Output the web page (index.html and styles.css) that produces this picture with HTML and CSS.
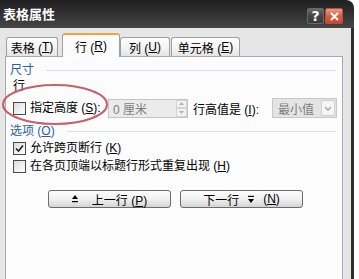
FILE: index.html
```html
<!DOCTYPE html>
<html lang="zh">
<head>
    <meta charset="UTF-8">
    <title>表格属性</title>
    <link rel="stylesheet" href="styles.css">
</head>
<body>

<div class="window">
    <div class="titlebar">
        <span class="title">表格属性</span>
        <div class="caption-btns">
            <span class="cbtn help">?</span>
            <span class="cbtn close">
                <svg width="9" height="9" viewBox="0 0 9 9"><path d="M1 1 L8 8 M8 1 L1 8" stroke="#fff" stroke-width="2"/></svg>
            </span>
        </div>
    </div>

    <div class="client">
        <div class="tabs">
            <div class="tab first">表格 (<u>T</u>)</div>
            <div class="tab active">行 (<u>R</u>)</div>
            <div class="tab">列 (<u>U</u>)</div>
            <div class="tab last">单元格 (<u>E</u>)</div>
        </div>

        <div class="panel">
            <!-- red ring drawn over the checkbox -->
            <svg class="mark" width="108" height="43" viewBox="0 0 108 43">
                <ellipse cx="54" cy="21.5" rx="52" ry="19.5" fill="none" stroke="#c8606c" stroke-width="2"/>
            </svg>

            <div class="group">尺寸</div>
            <div class="sub">行</div>

            <div class="height-row">
                <label class="check size">
                    <span class="box"></span>指定高度 (<u>S</u>):
                </label>
                <div class="spin">
                    <span>0 厘米</span>
                    <span class="spin-btns">
                        <span class="sb"><svg width="5" height="3" viewBox="0 0 5 3"><path d="M0 3 L2.5 0 L5 3Z" fill="#b0b0b0"/></svg></span>
                        <span class="sb"><svg width="5" height="3" viewBox="0 0 5 3"><path d="M0 0 L2.5 3 L5 0Z" fill="#b0b0b0"/></svg></span>
                    </span>
                </div>
                <span class="lbl">行高值是 (<u>I</u>):</span>
                <div class="select">
                    <span>最小值</span>
                    <span class="arrow">
                        <svg width="8" height="5" viewBox="0 0 8 5"><path d="M1 1 L4 4 L7 1" fill="none" stroke="#a8a8a8" stroke-width="1.5"/></svg>
                    </span>
                </div>
            </div>

            <div class="group options">选项 (<u>O</u>)</div>

            <label class="check opt">
                <span class="box">
                    <svg width="9" height="9" viewBox="0 0 9 9"><path d="M1 4.5 L3.5 7 L8 1.5" fill="none" stroke="#222" stroke-width="1.6"/></svg>
                </span>允许跨页断行 (<u>K</u>)
            </label>
            <label class="check opt second">
                <span class="box"></span>在各页顶端以标题行形式重复出现 (<u>H</u>)
            </label>

            <div class="nav">
                <button class="navbtn">
                    <svg class="ico" width="6" height="8" viewBox="0 0 6 8"><path d="M0 4 L3 0 L6 4Z" fill="#000"/><rect x="0" y="6" width="6" height="1.2" fill="#000"/></svg>
                    <span>上一行 (<u>P</u>)</span>
                </button>
                <button class="navbtn">
                    <span>下一行</span>
                    <svg class="ico down" width="6" height="8" viewBox="0 0 6 8"><rect x="0" y="0.8" width="6" height="1.2" fill="#000"/><path d="M0 4 L3 8 L6 4Z" fill="#000"/></svg>
                    <span>(<u>N</u>)</span>
                </button>
            </div>
        </div>
    </div>
</div>

</body>
</html>
```

FILE: styles.css
```css
body {
    margin: 0;
    background: #fff;
    font-family: "Liberation Sans", "Noto Sans CJK SC", sans-serif;
    font-size: 12px;
    color: #000;
    overflow: hidden;
}
u {
    text-decoration: underline;
}
.window {
    width: 354px;
}
.titlebar {
    height: 28px;
    box-sizing: border-box;
    display: flex;
    justify-content: space-between;
    padding: 0 11px 0 3px;
    background: linear-gradient(to bottom, #1f1f1f, #333 55%, #474747);
    border-top-right-radius: 8px;
}
.title {
    color: #fff;
    font-weight: bold;
    font-size: 13px;
    font-family: "Noto Sans CJK SC", sans-serif;
    line-height: 28px;
}
.caption-btns {
    display: flex;
    gap: 1px;
    margin-top: 8px;
}
.cbtn {
    width: 18px;
    height: 16px;
    box-sizing: border-box;
    border-radius: 2px;
    display: flex;
    align-items: center;
    justify-content: center;
}
.help {
    width: 17px;
    border: 1px solid #6a6a6a;
    background: linear-gradient(to bottom, #6a6a6a, #444 50%, #3a3a3a);
    color: #fff;
    font-weight: bold;
    font-size: 14px;
    font-family: "DejaVu Sans", sans-serif;
}
.close {
    border: 1px solid #b05040;
    background: linear-gradient(to bottom, #ec9a80, #d8603f 50%, #c8462c);
}
.client {
    height: 251px;
    box-sizing: border-box;
    background: #e6e6e6;
    border-right: 3px solid #2e2e2e;
    padding: 5px 8px 0 5px;
    overflow: hidden;
}
.tabs {
    display: flex;
    align-items: flex-end;
    height: 24px;
    margin-bottom: -1px;
}
.tab {
    height: 19px;
    margin-bottom: 1px;
    box-sizing: border-box;
    border: 1px solid #9aa0a6;
    border-bottom: none;
    border-radius: 3px 3px 0 0;
    background: linear-gradient(to bottom, #fff, #f2f2f2 60%, #e4e4e4);
    display: flex;
    align-items: center;
    justify-content: center;
    width: 50px;
}
.tab.first {
    margin-left: 1px;
    width: 52px;
}
.tab.active {
    height: 24px;
    margin-bottom: 0;
    margin-left: 4px;
    width: 58px;
    background: #fcfcfd;
    border-top: 2px solid #f0a43c;
    position: relative;
    z-index: 1;
}
.tab.last {
    margin-left: 1px;
    width: 69px;
}
.panel {
    position: relative;
    height: 240px;
    background: #fcfcfd;
    border: 1px solid #a4abb2;
    padding-top: 5px;
}
.mark {
    position: absolute;
    left: -5px;
    top: 26px;
}
.group {
    display: flex;
    align-items: center;
    height: 16px;
    line-height: 16px;
    padding-left: 4px;
    color: #2b5ea8;
}
.group::after {
    content: "";
    flex: 1;
    height: 1px;
    margin: 0 6px 0 12px;
    background: #d8dce4;
}
.group.options {
    margin-top: 5px;
}
.sub {
    height: 16px;
    line-height: 16px;
    padding-left: 7px;
}
.height-row {
    display: flex;
    align-items: center;
    height: 20px;
    margin-top: 4px;
    padding-left: 7px;
}
.check {
    display: flex;
    align-items: center;
    height: 16px;
    line-height: 16px;
    white-space: nowrap;
}
.check.size {
    width: 95px;
}
.box {
    width: 13px;
    height: 13px;
    box-sizing: border-box;
    border: 1px solid #4a4a4a;
    background: linear-gradient(135deg, #dcdcdc, #fff);
    margin-right: 4px;
    display: flex;
    align-items: center;
    justify-content: center;
    flex: none;
}
.spin {
    width: 80px;
    height: 19px;
    box-sizing: border-box;
    border: 1px solid #c4c4c4;
    background: #ebebeb;
    color: #7c7c7c;
    display: flex;
    align-items: center;
    justify-content: space-between;
    padding-left: 4px;
}
.spin-btns {
    display: flex;
    flex-direction: column;
    width: 11px;
    height: 17px;
}
.sb {
    flex: 1;
    display: flex;
    align-items: center;
    justify-content: center;
    background: #f2f2f2;
    border: 1px solid #d4d4d4;
}
.lbl {
    margin-left: 5px;
    width: 79px;
    white-space: nowrap;
}
.select {
    width: 65px;
    height: 20px;
    box-sizing: border-box;
    border: 1px solid #c8c8c8;
    background: #e4e4e4;
    color: #7c7c7c;
    display: flex;
    align-items: center;
    justify-content: space-between;
    padding: 0 1px 0 5px;
}
.arrow {
    width: 14px;
    height: 16px;
    box-sizing: border-box;
    border: 1px solid #d0d0d0;
    background: #f6f6f6;
    display: flex;
    align-items: center;
    justify-content: center;
}
.opt {
    margin-top: 1px;
    padding-left: 7px;
}
.opt.second {
    margin-top: 2px;
}
.nav {
    display: flex;
    gap: 9px;
    margin-top: 16px;
    padding-left: 42px;
}
.navbtn {
    width: 123px;
    height: 18px;
    box-sizing: border-box;
    border: 1px solid #6c6c6c;
    border-radius: 3px;
    background: linear-gradient(to bottom, #fdfdfd, #f1f1f1 50%, #d4d4d4);
    font: inherit;
    color: #000;
    display: flex;
    align-items: center;
    justify-content: center;
    padding: 0;
    gap: 9px;
}
.navbtn .ico {
    margin-right: 5px;
}
.navbtn .ico.down {
    margin-right: 0;
}
```
